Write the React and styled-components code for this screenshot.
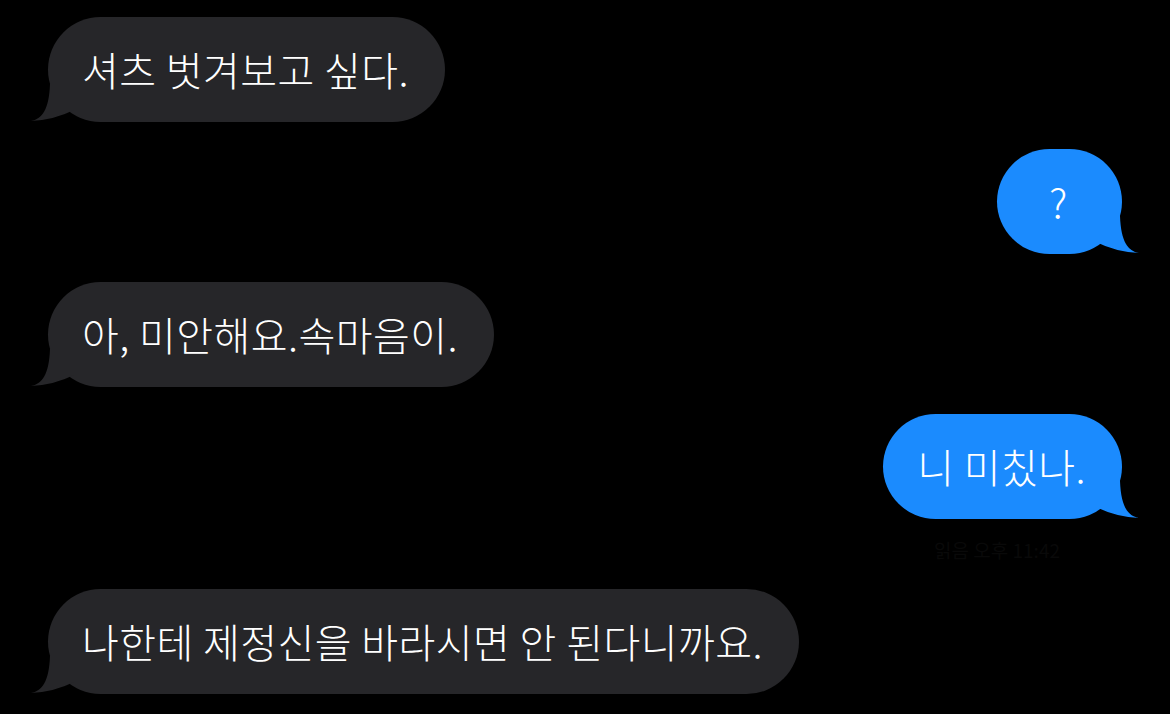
import React from "react";
import styled, { createGlobalStyle } from "styled-components";

const GlobalStyle = createGlobalStyle`
  html, body {
    margin: 0;
    padding: 0;
    background: #000;
  }
  body {
    font-family: "Noto Sans CJK KR", "Noto Sans", sans-serif;
    -webkit-font-smoothing: antialiased;
  }
`;

const Thread = styled.div`
  width: 1170px;
  height: 714px;
  box-sizing: border-box;
  padding: 17px 48px 0 48px;
  display: flex;
  flex-direction: column;
  background: #000;
  overflow: hidden;
`;

const Row = styled.div`
  display: flex;
  justify-content: ${(p) => (p.$me ? "flex-end" : "flex-start")};
  margin-top: ${(p) => p.$gap || 0}px;
`;

const Bubble = styled.div`
  position: relative;
  box-sizing: border-box;
  min-width: ${(p) => (p.$min ? `${p.$min}px` : "auto")};
  padding: 30px 36px 30px 34px;
  border-radius: 53px;
  background: ${(p) => (p.$me ? "#1b8bfe" : "#262629")};
  color: #fff;
  font-size: 40px;
  font-weight: 300;
  letter-spacing: 0.45px;
  line-height: 45px;
  text-align: center;
  white-space: nowrap;
`;

const Label = styled.span`
  position: relative;
`;

const TailSvg = styled.svg`
  position: absolute;
  bottom: 0;
  width: 60px;
  height: 50px;
  ${(p) =>
    p.$me
      ? "right: -20px; transform: scaleX(-1);"
      : "left: -20px;"}
`;

const Receipt = styled.div`
  display: flex;
  justify-content: flex-end;
  padding-right: 62px;
  margin-top: 20px;
  height: 22px;
  font-size: 19px;
  line-height: 22px;
  color: #090909;
`;

function Tail({ me }) {
  return (
    <TailSvg $me={me} viewBox="0 0 60 50" aria-hidden="true">
      <path
        d="M3 49 C14 47 21 38 22 12 L46 12 L46 38 Q26 48 3 49 Z"
        fill={me ? "#1b8bfe" : "#262629"}
      />
    </TailSvg>
  );
}

function Message({ me, children, gap, min }) {
  return (
    <Row $me={me} $gap={gap}>
      <Bubble $me={me} $min={min}>
        <Tail me={me} />
        <Label>{children}</Label>
      </Bubble>
    </Row>
  );
}

export default function App() {
  return (
    <>
      <GlobalStyle />
      <Thread>
        <Message>셔츠 벗겨보고 싶다.</Message>
        <Message me gap={27} min={125}>?</Message>
        <Message gap={28}>아, 미안해요.속마음이.</Message>
        <Message me gap={27}>니 미칬나.</Message>
        <Receipt>읽음 오후 11:42</Receipt>
        <Message gap={28}>나한테 제정신을 바라시면 안 된다니까요.</Message>
      </Thread>
    </>
  );
}
